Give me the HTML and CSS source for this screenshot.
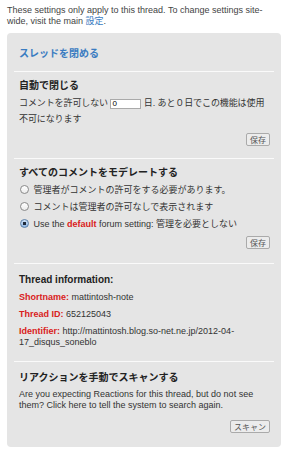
FILE: index.html
```html
<!DOCTYPE html>
<html lang="ja">
<head>
    <meta charset="UTF-8">
    <meta name="viewport" content="width=device-width, initial-scale=1.0">
    <title>Thread settings</title>
    <link rel="stylesheet" href="styles.css">
</head>
<body>
    <p class="intro">These settings only apply to this thread. To change settings site-wide, visit the main <a href="#">設定</a>.</p>

    <div class="panel">
        <div class="section title-section">
            <a class="panel-title" href="#">スレッドを閉める</a>
        </div>

        <div class="section close-section">
            <h3>自動で閉じる</h3>
            <p class="close-text">コメントを許可しない <input type="text" class="days" value="0"> 日. あと０日でこの機能は使用不可になります</p>
            <div class="actions"><button>保存</button></div>
        </div>

        <div class="section mod-section">
            <h3>すべてのコメントをモデレートする</h3>
            <label class="radio"><input type="radio" name="mod"> 管理者がコメントの許可をする必要があります。</label>
            <label class="radio"><input type="radio" name="mod"> コメントは管理者の許可なしで表示されます</label>
            <label class="radio"><input type="radio" name="mod" checked> Use the <b class="red">default</b> forum setting: 管理を必要としない</label>
            <div class="actions"><button>保存</button></div>
        </div>

        <div class="section info-section">
            <h3>Thread information:</h3>
            <p class="info"><b class="red">Shortname:</b> mattintosh-note</p>
            <p class="info"><b class="red">Thread ID:</b> 652125043</p>
            <p class="info long"><b class="red">Identifier:</b> http://mattintosh.blog.so-net.ne.jp/2012-04-17_disqus_soneblo</p>
        </div>

        <div class="section scan-section">
            <h3>リアクションを手動でスキャンする</h3>
            <p class="plain">Are you expecting Reactions for this thread, but do not see them? Click here to tell the system to search again.</p>
            <div class="actions"><button>スキャン</button></div>
        </div>
    </div>
</body>
</html>
```

FILE: styles.css
```css
body {
    margin: 0;
    padding: 5px 7px;
    font-family: "Liberation Sans", "Noto Sans CJK JP", sans-serif;
    font-size: 9px;
    color: #333;
    background: #fff;
}
a {
    color: #3a7cc1;
    text-decoration: none;
}
.intro {
    margin: 0 0 6px;
    line-height: 11px;
    color: #444;
}
.panel {
    background: #e5e5e5;
    border-radius: 4px;
    padding: 0 7px 1px;
}
.section {
    border-top: 1px solid #fafafa;
    padding: 8px 5px 12px;
}
.section:first-child {
    border-top: none;
}
.title-section {
    padding: 15px 5px 11px;
    line-height: 12px;
}
.panel-title {
    font-size: 10px;
    font-weight: bold;
}
h3 {
    margin: 0 0 3px;
    font-size: 10px;
    line-height: 12px;
    color: #222;
}
.section p {
    margin: 0;
}
.close-text {
    line-height: 16px;
    letter-spacing: -0.1px;
}
.days {
    width: 27px;
    height: 8px;
    margin: 0;
    font-size: 8px;
    padding: 0 1px;
    border: 1px solid #aaa;
    vertical-align: middle;
}
.radio {
    display: block;
    height: 17px;
    line-height: 17px;
    white-space: nowrap;
}
.radio input {
    appearance: none;
    -webkit-appearance: none;
    box-sizing: border-box;
    margin: 0 2px 0 1px;
    width: 9px;
    height: 9px;
    border: 1px solid #8a8a8a;
    border-radius: 50%;
    background: linear-gradient(#fff, #ececec);
    vertical-align: -1px;
}
.radio input:checked {
    border-color: #5a7fa8;
    background: radial-gradient(circle, #1e2a3a 0, #1e2a3a 1.6px, transparent 2px), linear-gradient(#cfe2f7, #8fb6e2);
}
.red {
    color: #d92020;
}
.info {
    line-height: 17px;
}
.section .long {
    line-height: 11px;
    margin-top: 3px;
}
.section .plain {
    line-height: 11px;
    margin-top: 5px;
}
.actions {
    text-align: right;
    margin-top: 6px;
    height: 13px;
}
.mod-section .actions {
    margin-top: 3px;
}
.mod-section {
    padding-bottom: 14px;
}
.info-section {
    padding-top: 10px;
    padding-bottom: 13px;
}
.scan-section {
    padding-top: 10px;
    padding-bottom: 13px;
}
.scan-section .actions {
    margin-top: 9px;
}
button {
    display: inline-block;
    height: 13px;
    font-family: "Noto Sans CJK JP", sans-serif;
    font-size: 8px;
    color: #555;
    background: #ececec;
    border: 1px solid #aaa;
    border-radius: 2px;
    padding: 0 3px;
    line-height: 11px;
    margin-right: -1px;
}
```
